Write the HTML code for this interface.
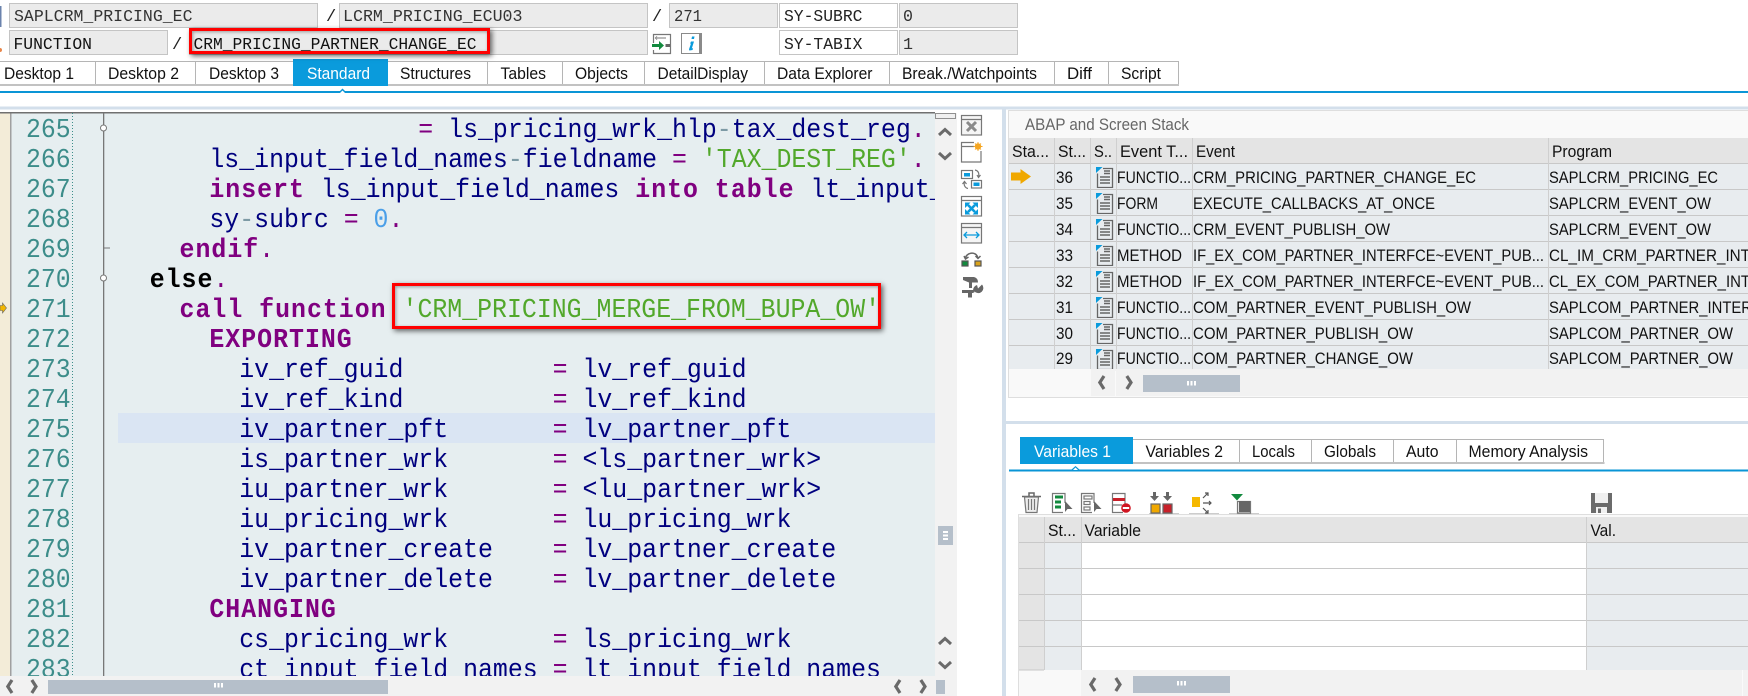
<!DOCTYPE html>
<html><head><meta charset="utf-8"><title>ABAP Debugger</title>
<style>
html,body{margin:0;padding:0;background:#fff;width:1748px;height:696px;overflow:hidden}
#base{position:absolute;left:0;top:0}
#clip{position:absolute;left:0;top:112px;width:935px;height:564px;overflow:hidden}
pre{position:absolute;margin:0;top:4px;font:27px/30px "Liberation Mono",monospace;transform:scaleX(.921);transform-origin:0 0;white-space:pre;color:#00007f}
#nums{left:26px;color:#3d8d8a;transform:scaleX(.918)}
#code{left:90px}
b{font-weight:700;letter-spacing:1.09px;color:#800080}
b.k{color:#000}
i{font-style:normal;color:#800080}
u{text-decoration:none;color:#52a82b}
s{text-decoration:none;color:#4b9fe8}
em{font-style:normal;color:#7d9aa5}
.red{position:absolute;box-sizing:border-box;border:3px solid #f00;box-shadow:2px 2px 5px rgba(0,0,0,.6),inset 1px 1px 3px rgba(0,0,0,.35)}
svg text{font-family:"Liberation Sans",sans-serif;font-size:17px;fill:#111}
svg text.m{font-family:"Liberation Mono",monospace;font-size:17px;fill:#333}
</style></head><body>
<svg id="base" width="1748" height="696" viewBox="0 0 1748 696" xmlns="http://www.w3.org/2000/svg">
<defs>
<symbol id="doc" viewBox="0 0 19 21" width="19" height="21"><path d="M1 0h6.500L1 6z" fill="#0a9bdc"/><path d="M2.500 6.500V20.500H17.500V1.500H8" fill="#e8ecef" stroke="#666" stroke-width="1.300"/><path d="M9 4h6M9 6.500h6M5 10h10M5 13h10M5 16h10" stroke="#666" stroke-width="1.500"/></symbol>
<path id="cl" d="M6 1 1.800 7.500 6 14" fill="none" stroke="#6a6a6a" stroke-width="3.200"/>
<path id="cr" d="M1.800 1 6 7.500 1.800 14" fill="none" stroke="#6a6a6a" stroke-width="3.200"/>
<path id="cu" d="M1 8 7 2.500 13 8" fill="none" stroke="#6a6a6a" stroke-width="3"/>
<path id="cd" d="M1 2 7 7.500 13 2" fill="none" stroke="#6a6a6a" stroke-width="3"/>
</defs>

<!-- top-left fragments -->
<rect x="0" y="6" width="1.500" height="21" fill="#6b83ad"/><circle cx="0" cy="50" r="2" fill="#e8864a"/>

<!-- field rows -->
<g fill="#ebebeb" stroke="#c4c4c4">
<rect x="9.500" y="3.500" width="308" height="24"/><rect x="339.500" y="3.500" width="308" height="24"/><rect x="669.500" y="3.500" width="108" height="24"/><rect x="899.500" y="3.500" width="118" height="24"/>
<rect x="9.500" y="30.500" width="158" height="24"/><rect x="189.500" y="30.500" width="458" height="24"/><rect x="899.500" y="30.500" width="118" height="24"/>
</g>
<g fill="#fff" stroke="#c4c4c4"><rect x="779.500" y="3.500" width="118" height="24"/><rect x="779.500" y="30.500" width="118" height="24"/></g>
<text class="m" x="14" y="21" textLength="178.500" lengthAdjust="spacingAndGlyphs">SAPLCRM_PRICING_EC</text>
<text class="m" x="326" y="21" style="fill:#222">/</text>
<text class="m" x="343" y="21" textLength="179.500" lengthAdjust="spacingAndGlyphs">LCRM_PRICING_ECU03</text>
<text class="m" x="652" y="21" style="fill:#222">/</text>
<text class="m" x="674" y="21" textLength="28" lengthAdjust="spacingAndGlyphs">271</text>
<text class="m" x="784" y="21" textLength="78.500" lengthAdjust="spacingAndGlyphs" style="fill:#222">SY-SUBRC</text>
<text class="m" x="903" y="21" textLength="10" lengthAdjust="spacingAndGlyphs">0</text>
<text class="m" x="13.500" y="49" textLength="78.500" lengthAdjust="spacingAndGlyphs" style="fill:#111">FUNCTION</text>
<text class="m" x="172" y="49" style="fill:#222">/</text>
<text class="m" x="193.500" y="49" textLength="283" lengthAdjust="spacingAndGlyphs" style="fill:#111">CRM_PRICING_PARTNER_CHANGE_EC</text>
<text class="m" x="784" y="49" textLength="78.500" lengthAdjust="spacingAndGlyphs" style="fill:#222">SY-TABIX</text>
<text class="m" x="903" y="49" textLength="10" lengthAdjust="spacingAndGlyphs">1</text>
<!-- icon next-to field -->
<g transform="translate(652,33)"><path d="M1.500 10V1.500H18.500V20.500H1.500V17" fill="none" stroke="#777" stroke-width="1.200"/><path d="M5 5h9M5 3.500l-1.500 1.500L5 6.500" fill="none" stroke="#777"/><path d="M0 11h7V8l5 4.500-5 4.500v-3H0z" fill="#128a3e"/><rect x="13.500" y="11" width="4.500" height="3" fill="#666"/></g>
<g transform="translate(681,33)"><rect x=".5" y=".5" width="20" height="20" fill="#fff" stroke="#8a8a8a"/><rect x="18" y="1" width="2" height="19" fill="#8a8a8a"/><path d="M11 3.500h2.500l-.5 2.500H10.500zM10 8.500h3L10.800 15.500l1.200-.5-.4 2-3.100.5q-.7-.2-.4-1.500L10 10.500l-1 .2z" fill="#0a9bdc"/></g>

<!-- main tabs -->
<rect x="0" y="61" width="1178" height="25" fill="#fff"/>
<path d="M0 61.500H1178.500V85" fill="none" stroke="#b5b5b5"/>
<rect x="0" y="84" width="1179" height="2" fill="#c2c2c2"/>
<g stroke="#b5b5b5"><path d="M95.500 62V84M195.500 62V84M487.500 62V84M562.500 62V84M644.500 62V84M764.500 62V84M889.500 62V84M1054.500 62V84M1108.500 62V84"/></g>
<rect x="293" y="59" width="95" height="27" fill="#0a9bdc"/>
<text x="4" y="79" textLength="70" lengthAdjust="spacingAndGlyphs">Desktop 1</text>
<text x="108" y="79" textLength="71" lengthAdjust="spacingAndGlyphs">Desktop 2</text>
<text x="209" y="79" textLength="70" lengthAdjust="spacingAndGlyphs">Desktop 3</text>
<text x="307" y="79" textLength="63" lengthAdjust="spacingAndGlyphs" style="fill:#fff">Standard</text>
<text x="400" y="79" textLength="71" lengthAdjust="spacingAndGlyphs">Structures</text>
<text x="500.500" y="79" textLength="45.500" lengthAdjust="spacingAndGlyphs">Tables</text>
<text x="575" y="79" textLength="53" lengthAdjust="spacingAndGlyphs">Objects</text>
<text x="657.500" y="79" textLength="90.500" lengthAdjust="spacingAndGlyphs">DetailDisplay</text>
<text x="777" y="79" textLength="95.500" lengthAdjust="spacingAndGlyphs">Data Explorer</text>
<text x="902" y="79" textLength="135" lengthAdjust="spacingAndGlyphs">Break./Watchpoints</text>
<text x="1067" y="79" textLength="25" lengthAdjust="spacingAndGlyphs">Diff</text>
<text x="1121" y="79" textLength="40" lengthAdjust="spacingAndGlyphs">Script</text>
<rect x="0" y="91" width="1748" height="2" fill="#0a95d6"/>
<path d="M338 93 342.500 88.500 347 93z" fill="#0a95d6"/><path d="M340 93 342.500 90.500 345 93z" fill="#fff"/>

<!-- separators -->
<rect x="0" y="106.500" width="1748" height="3" fill="#d3dfeb"/>
<rect x="1002" y="107" width="4" height="589" fill="#d3dfeb"/>

<!-- editor background -->
<rect x="0" y="112" width="935" height="564" fill="#e6eef0"/>
<rect x="0" y="112" width="10" height="564" fill="#f3ecd8"/>
<rect x="10" y="112" width="1.500" height="564" fill="#a0a0a0"/>
<rect x="0" y="112" width="935" height="1.500" fill="#707070"/>
<path d="M72.500 113V676" stroke="#3d8d8a" stroke-dasharray="1 2"/>
<rect x="103" y="113" width="1.300" height="563" fill="#777"/>
<path d="M104 248h6" stroke="#777"/>
<rect x="118" y="413" width="817" height="30" fill="#dae5f3"/>
<circle cx="103.500" cy="278" r="3" fill="#fff" stroke="#777"/><circle cx="103.500" cy="128" r="3" fill="#fff" stroke="#777"/>
<path d="M0 305.500h2.500v-2.500l4 5-4 5v-2.500H0z" fill="#f2b600" stroke="#666" stroke-width=".6"/>

<!-- vertical scroll -->
<rect x="935" y="113" width="22" height="563" fill="#f2f2f2"/>
<rect x="935.500" y="113.500" width="20" height="5" fill="#f0f0f0" stroke="#909090"/>
<use href="#cu" x="938" y="127"/><use href="#cd" x="938" y="151"/>
<rect x="938" y="526" width="15" height="19" fill="#b5bfca"/><path d="M943 532h5M943 535.500h5M943 539h5" stroke="#fff" stroke-width="2"/>
<use href="#cu" x="938" y="636"/><use href="#cd" x="938" y="660"/>
<!-- horizontal scroll -->
<rect x="0" y="676" width="957" height="20" fill="#f2f2f2"/>
<use href="#cl" x="6" y="679"/><use href="#cr" x="30" y="679"/>
<rect x="48" y="680" width="340" height="14" fill="#b5bfca"/><path d="M215 683v4.500M218.500 683v4.500M222 683v4.500" stroke="#fff" stroke-width="2"/>
<use href="#cl" x="894" y="679"/><use href="#cr" x="919" y="679"/>
<rect x="936" y="680" width="9" height="14" fill="#b5bfca"/>

<!-- side icons -->
<g fill="none" stroke="#777" stroke-width="1.200">
<g transform="translate(961,115)"><rect x=".5" y=".5" width="20" height="19.500" fill="#f5f5f5"/><path d="M1 4.500h19"/><path d="M6 7 15 16M15 7 6 16" stroke="#8a8a8a" stroke-width="3"/></g>
<g transform="translate(961,142)"><path d="M13 .5H.5V20H20V9M1 4.500h12"/><circle cx="17" cy="4.500" r="3.200" fill="#f5a623" stroke="none"/><path d="M17 0v9M12.500 4.500h9M14 1.500l6 6M20 1.500l-6 6" stroke="#f5a623" stroke-width=".9"/></g>
<g transform="translate(961,169)"><rect x=".5" y="1.500" width="11" height="8" fill="#fff"/><rect x="3" y="4" width="6" height="3.500" fill="#0a9bdc" stroke="none"/><rect x="10.500" y="11.500" width="10" height="7.500" fill="#fff"/><rect x="12.500" y="13.500" width="6" height="3.500" fill="#0a9bdc" stroke="none"/><path d="M14 1c3 .5 4.500 3 3.500 7M16 6l1.500 2.500L19.500 6M7 19.500C4 19 2.500 16 3.500 12.500M1.500 15 3.500 12.500 5.500 15"/></g>
<g transform="translate(961,196)"><rect x=".5" y=".5" width="20" height="19.500" fill="#fff"/><path d="M1 4.500h19"/><path d="M7 9 14 16M14 9 7 16" stroke="#0a9bdc" stroke-width="2.600"/><path d="M4 6.500h5.500L4 12zM17 6.500h-5.500L17 12zM4 18.500h5.500L4 13zM17 18.500h-5.500L17 13z" fill="#0a9bdc" stroke="none"/></g>
<g transform="translate(961,223)"><rect x=".5" y=".5" width="20" height="19.500" fill="#f5f5f5"/><path d="M1 4.500h19"/><path d="M3 12h15M6 9l-3 3 3 3M15 9l3 3-3 3" stroke="#0a9bdc" stroke-width="1.300"/></g>
<g transform="translate(961,250)"><path d="M4.500 9C4 3 15 0 17 8M3 6 4.500 9 7.500 7M14.500 6 17 8.500 19.500 6" stroke="#666" stroke-width="1.500"/><rect x="1" y="11" width="6" height="5" fill="#128a3e" stroke="#555"/><rect x="14" y="11" width="6" height="5" fill="#d9a21b" stroke="#555"/></g>
<g transform="translate(962,277)" stroke="none" fill="#666"><path d="M1 0H12Q16 1 16 5.500H10V8H7V5.500L1 3z"/><rect x="7" y="8" width="3" height="3"/><path d="M0 13h11.500v3H0z"/><rect x="6" y="15.500" width="4" height="5"/><path d="M20 7.500A5 5 0 0 1 12.500 14.500L12 16l-1-2.500Q11 9.500 15 8l1 3.500z"/></g>
</g>

<!-- stack panel -->
<rect x="1008.500" y="110.500" width="740" height="287" fill="#f9f9f9" stroke="#dedede"/>
<text x="1025" y="130" textLength="164" lengthAdjust="spacingAndGlyphs" style="fill:#666">ABAP and Screen Stack</text>
<rect x="1009" y="138" width="739" height="25" fill="#e4e4e4"/>
<rect x="1009" y="163" width="739" height="206" fill="#e8ecef"/>
<g stroke="#c8c8c8"><path d="M1009 163.500H1748M1009 189.500H1748M1009 215.500H1748M1009 241.500H1748M1009 267.500H1748M1009 293.500H1748M1009 319.500H1748M1009 345.500H1748"/>
<path d="M1054.500 138V369M1090.500 138V369M1116.500 138V369M1192.500 138V369M1548.500 138V369" stroke="#cfcfcf"/></g>
<rect x="1091" y="369" width="657" height="27" fill="#f2f2f2"/>
<use href="#cl" x="1098" y="375"/><use href="#cr" x="1125" y="375"/>
<path d="M1115.500 369V396" stroke="#fafafa"/>
<rect x="1143" y="375" width="97" height="17" fill="#b5bfca"/><path d="M1188 381v4.500M1191.500 381v4.500M1195 381v4.500" stroke="#fff" stroke-width="2"/>
<text x="1012" y="157" textLength="37" lengthAdjust="spacingAndGlyphs">Sta...</text>
<text x="1058" y="157" textLength="28" lengthAdjust="spacingAndGlyphs">St...</text>
<text x="1094" y="157" textLength="18" lengthAdjust="spacingAndGlyphs">S..</text>
<text x="1120" y="157" textLength="68" lengthAdjust="spacingAndGlyphs">Event T...</text>
<text x="1196" y="157" textLength="39" lengthAdjust="spacingAndGlyphs">Event</text>
<text x="1552" y="157" textLength="60" lengthAdjust="spacingAndGlyphs">Program</text>
<path d="M1011 172.500h9.500V169L1031 176.500 1020.500 184v-3.500H1011z" fill="#f0a800"/>
<use href="#doc" x="1095" y="167"/><use href="#doc" x="1095" y="193"/><use href="#doc" x="1095" y="219"/><use href="#doc" x="1095" y="245"/><use href="#doc" x="1095" y="271"/><use href="#doc" x="1095" y="297"/><use href="#doc" x="1095" y="323"/><use href="#doc" x="1095" y="349"/>
<rect x="1092" y="369" width="24" height="2" fill="#f2f2f2"/>
<g>
<text x="1056" y="183" textLength="17" lengthAdjust="spacingAndGlyphs">36</text>
<text x="1056" y="209" textLength="17" lengthAdjust="spacingAndGlyphs">35</text>
<text x="1056" y="235" textLength="17" lengthAdjust="spacingAndGlyphs">34</text>
<text x="1056" y="261" textLength="17" lengthAdjust="spacingAndGlyphs">33</text>
<text x="1056" y="287" textLength="17" lengthAdjust="spacingAndGlyphs">32</text>
<text x="1056" y="313" textLength="17" lengthAdjust="spacingAndGlyphs">31</text>
<text x="1056" y="339" textLength="17" lengthAdjust="spacingAndGlyphs">30</text>
<text x="1056" y="364" textLength="17" lengthAdjust="spacingAndGlyphs">29</text>
<text x="1117" y="183" textLength="74" lengthAdjust="spacingAndGlyphs">FUNCTIO...</text>
<text x="1117" y="209" textLength="41" lengthAdjust="spacingAndGlyphs">FORM</text>
<text x="1117" y="235" textLength="74" lengthAdjust="spacingAndGlyphs">FUNCTIO...</text>
<text x="1117" y="261" textLength="65" lengthAdjust="spacingAndGlyphs">METHOD</text>
<text x="1117" y="287" textLength="65" lengthAdjust="spacingAndGlyphs">METHOD</text>
<text x="1117" y="313" textLength="74" lengthAdjust="spacingAndGlyphs">FUNCTIO...</text>
<text x="1117" y="339" textLength="74" lengthAdjust="spacingAndGlyphs">FUNCTIO...</text>
<text x="1117" y="364" textLength="74" lengthAdjust="spacingAndGlyphs">FUNCTIO...</text>
<text x="1193" y="183" textLength="283" lengthAdjust="spacingAndGlyphs">CRM_PRICING_PARTNER_CHANGE_EC</text>
<text x="1193" y="209" textLength="242" lengthAdjust="spacingAndGlyphs">EXECUTE_CALLBACKS_AT_ONCE</text>
<text x="1193" y="235" textLength="197" lengthAdjust="spacingAndGlyphs">CRM_EVENT_PUBLISH_OW</text>
<text x="1193" y="261" textLength="351" lengthAdjust="spacingAndGlyphs">IF_EX_COM_PARTNER_INTERFCE~EVENT_PUB...</text>
<text x="1193" y="287" textLength="351" lengthAdjust="spacingAndGlyphs">IF_EX_COM_PARTNER_INTERFCE~EVENT_PUB...</text>
<text x="1193" y="313" textLength="278" lengthAdjust="spacingAndGlyphs">COM_PARTNER_EVENT_PUBLISH_OW</text>
<text x="1193" y="339" textLength="220" lengthAdjust="spacingAndGlyphs">COM_PARTNER_PUBLISH_OW</text>
<text x="1193" y="364" textLength="220" lengthAdjust="spacingAndGlyphs">COM_PARTNER_CHANGE_OW</text>
<text x="1549" y="183" textLength="169" lengthAdjust="spacingAndGlyphs">SAPLCRM_PRICING_EC</text>
<text x="1549" y="209" textLength="162" lengthAdjust="spacingAndGlyphs">SAPLCRM_EVENT_OW</text>
<text x="1549" y="235" textLength="162" lengthAdjust="spacingAndGlyphs">SAPLCRM_EVENT_OW</text>
<text x="1549" y="261" textLength="201" lengthAdjust="spacingAndGlyphs">CL_IM_CRM_PARTNER_INT</text>
<text x="1549" y="287" textLength="201" lengthAdjust="spacingAndGlyphs">CL_EX_COM_PARTNER_INT</text>
<text x="1549" y="313" textLength="203" lengthAdjust="spacingAndGlyphs">SAPLCOM_PARTNER_INTER</text>
<text x="1549" y="339" textLength="184" lengthAdjust="spacingAndGlyphs">SAPLCOM_PARTNER_OW</text>
<text x="1549" y="364" textLength="184" lengthAdjust="spacingAndGlyphs">SAPLCOM_PARTNER_OW</text>
</g>

<!-- lower pane -->
<rect x="1002" y="421" width="746" height="3" fill="#d3dfeb"/>
<rect x="1133" y="439" width="471" height="25" fill="#fff"/>
<path d="M1133 439.500H1603.500V463" fill="none" stroke="#b5b5b5"/>
<rect x="1133" y="462" width="471.500" height="2" fill="#c2c2c2"/>
<path d="M1239.500 440V462M1311.500 440V462M1393.500 440V462M1456.500 440V462" stroke="#b5b5b5"/>
<rect x="1020" y="437" width="113" height="27" fill="#0a9bdc"/>
<text x="1034" y="457" textLength="77" lengthAdjust="spacingAndGlyphs" style="fill:#fff">Variables 1</text>
<text x="1145.500" y="457" textLength="77.500" lengthAdjust="spacingAndGlyphs">Variables 2</text>
<text x="1252" y="457" textLength="43" lengthAdjust="spacingAndGlyphs">Locals</text>
<text x="1324" y="457" textLength="52" lengthAdjust="spacingAndGlyphs">Globals</text>
<text x="1406" y="457" textLength="32.500" lengthAdjust="spacingAndGlyphs">Auto</text>
<text x="1468.500" y="457" textLength="119.500" lengthAdjust="spacingAndGlyphs">Memory Analysis</text>
<rect x="1009" y="469.500" width="739" height="2" fill="#0a95d6"/>
<path d="M1071 470 1075.500 466 1080 470z" fill="#0a95d6"/><path d="M1073 470 1075.500 467.500 1078 470z" fill="#fff"/>

<!-- toolbar icons -->
<g fill="none" stroke="#777" stroke-width="1.200">
<g transform="translate(1022,492)"><path d="M0 4.500H19M7 4V1H12V4" stroke="#666" stroke-width="1.500"/><path d="M2.500 5 4 20.500H15L16.500 5z" fill="#eee"/><path d="M6.500 7v11M9.500 7v11M12.500 7v11" stroke="#777"/></g>
<g transform="translate(1052,493)"><path d="M11 19.500H.5V.5H13V10"/><path d="M3 4h8M3 9h6M3 14h6" stroke="#128a3e" stroke-width="3"/><path d="M13 8V19l2.500-3h5z" fill="#666" stroke="none"/></g>
<g transform="translate(1081,493)"><path d="M11 19.500H.5V.5H13V10"/><rect x="3" y="3" width="8" height="3"/><rect x="3" y="8.500" width="6" height="3"/><rect x="3" y="14" width="6" height="3"/><path d="M13 8V19l2.500-3h5z" fill="#666" stroke="none"/></g>
<g transform="translate(1112,493)"><path d="M11 19.500H.5V.5H13V11M1 12h9"/><rect x="1" y="5" width="12" height="3" fill="#c8202a" stroke="none"/><circle cx="14" cy="15" r="4.800" fill="#d01622" stroke="none"/><rect x="10.800" y="14" width="6.400" height="2" fill="#fff" stroke="none"/></g>
<g transform="translate(1149,492)" stroke="none" fill="#666"><path d="M4 0h3v4h3L5.500 9 1 4h3zM17 0h3v4h3L18.500 9 14 4h3z"/><rect x="2" y="12" width="9" height="9" fill="#f0a800" stroke="#666"/><rect x="14" y="12" width="9" height="9" fill="#c8202a" stroke="#666"/><rect x="0" y="21.500" width="30" height="1" fill="#999"/></g>
<g transform="translate(1189,492)"><rect x="3" y="5" width="8" height="10" fill="#f5b800" stroke="none"/><path d="M14 6 19 1M16 1h3v3M14 11h8M20 9l2 2-2 2M14 16l5 5M19 18v3h-3" stroke="#555" stroke-width="1.200"/><rect x="0" y="21.500" width="30" height="1" fill="#999" stroke="none"/></g>
<g transform="translate(1229,492)"><rect x="8.500" y="9.500" width="13" height="11.500" fill="#f0f0f0"/><rect x="10" y="9" width="11" height="11" fill="#666" stroke="none"/><path d="M2 2h12L8 8.500z" fill="#128a3e" stroke="none"/><rect x="0" y="21.500" width="30" height="1" fill="#999" stroke="none"/></g>
<g transform="translate(1591,493)" stroke="none"><path d="M0 0H21V20H0z" fill="#6b6b6b"/><rect x="4" y="0" width="13" height="10" fill="#f0f0f0"/><rect x="5" y="14" width="11" height="6" fill="#f0f0f0"/><rect x="7" y="15.500" width="3" height="4.500" fill="#6b6b6b"/></g>
</g>

<!-- variable table -->
<rect x="1018.500" y="514.500" width="730" height="182" fill="#f9f9f9" stroke="#dedede"/>
<rect x="1019" y="517" width="729" height="25" fill="#e4e4e4"/>
<rect x="1019" y="542" width="25" height="128" fill="#e4e4e4"/>
<rect x="1044" y="542" width="37" height="128" fill="#e8ecef"/>
<rect x="1081" y="542" width="505" height="128" fill="#fff"/>
<rect x="1586" y="542" width="162" height="128" fill="#e8ecef"/>
<g stroke="#c8c8c8"><path d="M1019 542.500H1748M1019 568.500H1748M1019 594.500H1748M1019 620.500H1748M1019 646.500H1748M1019 670H1044"/><path d="M1044.500 517V670M1081.500 517V670M1586.500 517V670" stroke="#cfcfcf"/></g>
<text x="1048" y="536" textLength="28" lengthAdjust="spacingAndGlyphs">St...</text>
<text x="1084.500" y="536" textLength="56.500" lengthAdjust="spacingAndGlyphs">Variable</text>
<text x="1590.500" y="536" textLength="25.500" lengthAdjust="spacingAndGlyphs">Val.</text>
<rect x="1081" y="670" width="667" height="26" fill="#f2f2f2"/>
<use href="#cl" x="1089" y="677"/><use href="#cr" x="1114" y="677"/>
<rect x="1133" y="676" width="97" height="17" fill="#b5bfca"/><path d="M1178 681v4.500M1181.500 681v4.500M1185 681v4.500" stroke="#fff" stroke-width="2"/>
<path d="M1742.500 670V696" stroke="#fafafa"/>
</svg>

<div id="clip">
<pre id="nums">265
266
267
268
269
270
271
272
273
274
275
276
277
278
279
280
281
282
283</pre>
<pre id="code">                      <i>=</i> ls_pricing_wrk_hlp<em>-</em>tax_dest_reg<i>.</i>
        ls_input_field_names<em>-</em>fieldname <i>=</i> <u>'TAX_DEST_REG'</u><i>.</i>
        <b>insert </b>ls_input_field_names<b> into table </b>lt_input_field_names<i>.</i>
        sy<em>-</em>subrc <i>=</i> <s>0</s><i>.</i>
      <b>endif</b><i>.</i>
    <b class="k">else</b><i>.</i>
      <b>call function </b><u>'CRM_PRICING_MERGE_FROM_BUPA_OW'</u>
        <b>EXPORTING</b>
          iv_ref_guid          <i>=</i> lv_ref_guid
          iv_ref_kind          <i>=</i> lv_ref_kind
          iv_partner_pft       <i>=</i> lv_partner_pft
          is_partner_wrk       <i>=</i> &lt;ls_partner_wrk&gt;
          iu_partner_wrk       <i>=</i> &lt;lu_partner_wrk&gt;
          iu_pricing_wrk       <i>=</i> lu_pricing_wrk
          iv_partner_create    <i>=</i> lv_partner_create
          iv_partner_delete    <i>=</i> lv_partner_delete
        <b>CHANGING</b>
          cs_pricing_wrk       <i>=</i> ls_pricing_wrk
          ct_input_field_names <i>=</i> lt_input_field_names</pre>
</div>

<div class="red" style="left:189px;top:28px;width:301px;height:26px"></div>
<div class="red" style="left:392px;top:283px;width:489px;height:46px"></div>
</body></html>
